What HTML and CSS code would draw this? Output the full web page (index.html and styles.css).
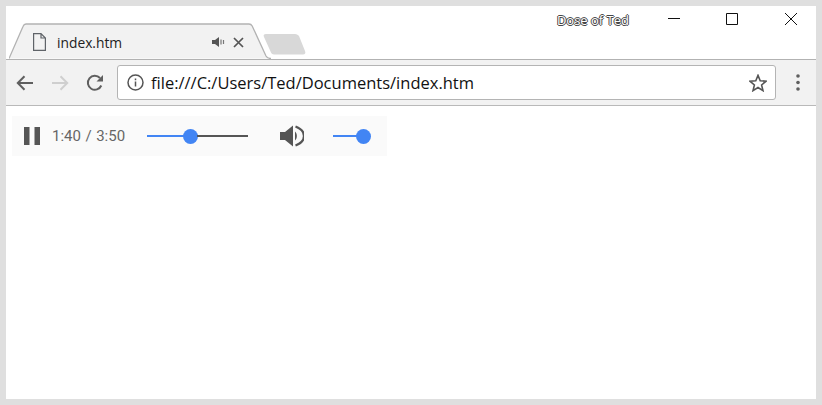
FILE: index.html
```html
<!DOCTYPE html>
<html lang="en">

<head>
    <meta charset="UTF-8">
    <title>index.htm</title>
    <link rel="stylesheet" href="styles.css">
</head>

<body>
    <div class="window">
        <div class="titlebar">
            <div class="tab">
                <svg class="tab-shape" width="262" height="37" viewBox="0 0 262 37">
                    <path d="M0 35.5L14 3.5C14.700 1.700 15.500 1 17 1H240C241.700 1 242.500 1.700 243.200 3L257 33C258 35 259 35.500 261 35.500H262" fill="#f2f2f2" stroke="#b2b2b2" stroke-width="1.3"/>
                </svg>
                <svg class="tab-file" width="13" height="18" viewBox="0 0 13 18">
                    <path d="M.6 .6H8L12.400 5V17.400H.6ZM8 .6V5H12.400" fill="none" stroke="#5f6368" stroke-width="1.2"/>
                </svg>
                <span class="tab-title">index.htm</span>
                <svg class="tab-sound" width="13" height="12" viewBox="0 0 13 12">
                    <path d="M0 4H3L7 1V11L3 8H0Z" fill="#555"/>
                    <path d="M9 3.5V8.5M11.5 4V8" stroke="#777" stroke-width="1.2"/>
                </svg>
                <svg class="tab-close" width="11" height="11" viewBox="0 0 11 11">
                    <path d="M1 1L10 10M10 1L1 10" stroke="#555" stroke-width="1.7"/>
                </svg>
            </div>
            <svg class="new-tab" width="44" height="22" viewBox="0 0 44 22">
                <path d="M4 1H33C35 1 36 2 37 3L43 18C44 20 43 21.500 41 21.500H12C10.500 21.500 9.500 20.500 9 19.500L2 4C1 2 2 1 4 1Z" fill="#d8d8d8"/>
            </svg>
            <div class="caption">
                <span class="profile">Dose of Ted</span>
                <div class="caption-buttons">
                    <svg width="58" height="12" viewBox="0 0 58 12"><path d="M22 5.500H34" stroke="#111"/></svg>
                    <svg width="58" height="12" viewBox="0 0 58 12"><path d="M22.500 .5H33.500V11.500H22.500Z" fill="none" stroke="#111"/></svg>
                    <svg width="58" height="12" viewBox="0 0 58 12"><path d="M23 0L35 12M35 0L23 12" stroke="#111"/></svg>
                </div>
            </div>
        </div>

        <div class="toolbar">
            <svg class="nav-back" width="18" height="16" viewBox="0 0 18 16">
                <path d="M17 8H2M8.500 1.300L1.800 8L8.500 14.700" fill="none" stroke="#5f5f5f" stroke-width="2"/>
            </svg>
            <svg class="nav-forward" width="18" height="16" viewBox="0 0 18 16">
                <path d="M1 8H16M9.500 1.300L16.200 8L9.500 14.700" fill="none" stroke="#cfcfcf" stroke-width="2"/>
            </svg>
            <svg class="nav-reload" width="18" height="18" viewBox="0 0 18 18">
                <path d="M15.300 11.500A7 7 0 1 1 14 4" fill="none" stroke="#5f5f5f" stroke-width="2"/>
                <path d="M17 1V7.500H10.500Z" fill="#5f5f5f"/>
            </svg>
            <div class="omnibox">
                <svg width="17" height="17" viewBox="0 0 17 17">
                    <circle cx="8.500" cy="8.500" r="7.500" fill="none" stroke="#555" stroke-width="1.500"/>
                    <path d="M8.500 7.500V12.500M8.500 4.500V6.200" stroke="#555" stroke-width="1.500"/>
                </svg>
                <span class="url">file:///C:/Users/Ted/Documents/index.htm</span>
                <svg class="star" width="18" height="18" viewBox=".5 .5 17 17">
                    <path d="M9 1.800L11.100 6.900L16.600 7.300L12.400 10.900L13.700 16.200L9 13.300L4.300 16.200L5.600 10.900L1.400 7.300L6.900 6.900Z" fill="none" stroke="#555" stroke-width="1.500"/>
                </svg>
            </div>
            <svg class="menu" width="4" height="17" viewBox="0 0 4 17">
                <circle cx="2" cy="2" r="1.800" fill="#5f5f5f"/>
                <circle cx="2" cy="8.500" r="1.800" fill="#5f5f5f"/>
                <circle cx="2" cy="15" r="1.800" fill="#5f5f5f"/>
            </svg>
        </div>

        <div class="page">
            <div class="player">
                <svg class="pause" width="16" height="18" viewBox="0 0 16 18">
                    <path d="M0 0H5.500V18H0ZM10.500 0H16V18H10.500Z" fill="#555"/>
                </svg>
                <span class="time">1:40 / 3:50</span>
                <div class="slider seek">
                    <div class="slider-fill" style="width: 43px"></div>
                    <div class="slider-thumb"></div>
                    <div class="slider-rest"></div>
                </div>
                <svg class="volume" width="24" height="24" viewBox="0 0 24 24">
                    <path d="M0 8H5L13 1.500V22.500L5 16H0Z" fill="#555"/>
                    <path d="M15 7.500C17.500 9.500 17.500 14.500 15 16.500Z" fill="#555"/>
                    <path d="M15.500 2.500C22 5 24 8 24 12C24 16 22 19 15.500 21.500" fill="none" stroke="#555" stroke-width="2.300"/>
                </svg>
                <div class="slider level">
                    <div class="slider-fill" style="width: 30px"></div>
                    <div class="slider-thumb"></div>
                </div>
            </div>
        </div>
    </div>
</body>

</html>
```

FILE: styles.css
```css
html,
body {
    height: 100%;
}

body {
    margin: 0;
    padding: 6px;
    box-sizing: border-box;
    background-color: #dfdfdf;
    overflow: hidden;
}

.window {
    height: 100%;
    display: flex;
    flex-direction: column;
    background-color: #fff;
}

.titlebar {
    height: 54px;
    flex: none;
    display: flex;
    align-items: flex-end;
    box-sizing: border-box;
    border-bottom: 1px solid #b2b2b2;
    padding-left: 3px;
    position: relative;
}

.tab {
    width: 262px;
    height: 36px;
    margin-bottom: -1px;
    display: flex;
    align-items: center;
    position: relative;
    font-family: "Open Sans", sans-serif;
}

.tab-shape {
    position: absolute;
    left: 0;
    top: -1px;
}

.tab-file,
.tab-title,
.tab-sound,
.tab-close {
    position: relative;
}

.tab-file {
    margin-left: 24px;
}

.tab-title {
    margin-left: 11px;
    font-size: 13.800px;
    color: #222;
    width: 155px;
    white-space: nowrap;
}

.tab-close {
    margin-left: 8px;
}

.new-tab {
    margin-left: -9px;
    margin-bottom: 4px;
}

.caption {
    position: absolute;
    top: 0;
    right: 0;
    display: flex;
    align-items: flex-start;
}

.profile {
    margin-top: 5px;
    margin-right: 17px;
    font-family: "Open Sans", sans-serif;
    font-size: 13px;
    color: #fff;
    text-shadow: 1px 0 #444, -1px 0 #444, 0 1px #444, 0 -1px #444;
    opacity: .99;
}

.caption-buttons {
    display: flex;
    padding-top: 7px;
    margin-right: -4px;
}

.toolbar {
    height: 46px;
    flex: none;
    display: flex;
    align-items: center;
    box-sizing: border-box;
    background-color: #f2f2f2;
    border-bottom: 1px solid #b9b9b9;
    padding-left: 10px;
}

.nav-forward {
    margin-left: 17px;
}

.nav-reload {
    margin-left: 17px;
}

.omnibox {
    width: 659px;
    height: 35px;
    margin-left: 13px;
    display: flex;
    align-items: center;
    gap: 7px;
    box-sizing: border-box;
    padding: 0 8px 0 9px;
    background-color: #fff;
    border: 1px solid #b4b4b4;
    border-radius: 3px;
}

.url {
    flex: 1;
    font-family: "Open Sans", sans-serif;
    font-size: 16.500px;
    color: #111;
    white-space: nowrap;
}

.menu {
    margin-left: 20px;
}

.page {
    flex: 1;
    padding: 10px 6px;
}

.player {
    width: 375px;
    height: 40px;
    display: flex;
    align-items: center;
    box-sizing: border-box;
    padding-left: 12px;
    background-color: #fafafa;
}

.time {
    margin-left: 12px;
    width: 95px;
    font-family: Roboto, sans-serif;
    font-size: 15px;
    word-spacing: .8px;
    color: #666;
    white-space: nowrap;
}

.slider {
    display: flex;
    align-items: center;
}

.seek {
    width: 101px;
}

.level {
    margin-left: 29px;
}

.slider-fill {
    height: 2px;
    background-color: #4285f4;
}

.slider-rest {
    flex: 1;
    height: 2px;
    background-color: #555;
}

.slider-thumb {
    width: 15px;
    height: 15px;
    margin-left: -7px;
    margin-right: -1px;
    border-radius: 50%;
    background-color: #4285f4;
}

.volume {
    margin-left: 32px;
}
```
